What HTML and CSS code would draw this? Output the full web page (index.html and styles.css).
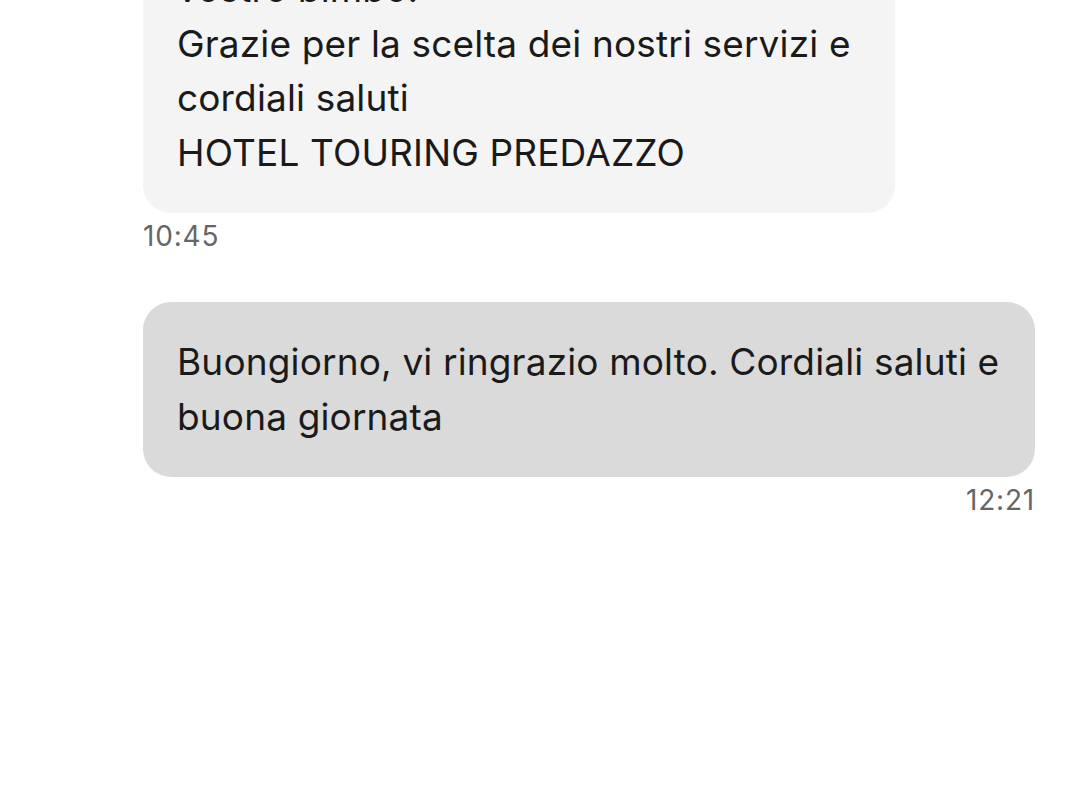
FILE: index.html
```html
<!DOCTYPE html>
<html lang="it">
<head>
    <meta charset="UTF-8">
    <meta name="viewport" content="width=device-width, initial-scale=1.0">
    <title>Messaggi</title>
    <link rel="stylesheet" href="styles.css">
</head>
<body>
    <div class="chat">
        <div class="message received">
            <div class="bubble">
                vostro bimbo.<br>
                Grazie per la scelta dei nostri servizi e<br>
                cordiali saluti<br>
                HOTEL TOURING PREDAZZO
            </div>
            <div class="time">10:45</div>
        </div>

        <div class="message sent">
            <div class="bubble">
                Buongiorno, vi ringrazio molto. Cordiali saluti e<br>
                buona giornata
            </div>
            <div class="time">12:21</div>
        </div>
    </div>
</body>
</html>
```

FILE: styles.css
```css
body {
    font-family: 'Inter', 'Noto Sans', sans-serif;
    background: #fff;
    color: #1a1a1a;
    margin: 0;
    padding: 0;
    overflow: hidden;
}

.chat {
    display: flex;
    flex-direction: column;
    gap: 49px;
    margin-top: -71px;
    padding: 0 45px 0 143px;
}

.message {
    display: flex;
    flex-direction: column;
}

.message.received {
    align-items: flex-start;
}

.message.sent {
    align-items: flex-end;
}

.bubble {
    max-width: 892px;
    box-sizing: border-box;
    padding: 33px 44px 33px 34px;
    border-radius: 28px;
    font-size: 37px;
    line-height: 54.5px;
    letter-spacing: 0.15px;
    white-space: nowrap;
}

.received .bubble {
    background: #f4f4f4;
}

.sent .bubble {
    background: #dadada;
    width: 892px;
}

.time {
    margin-top: 6px;
    font-size: 28px;
    line-height: 34px;
    letter-spacing: 0.8px;
    color: #666;
}
```
